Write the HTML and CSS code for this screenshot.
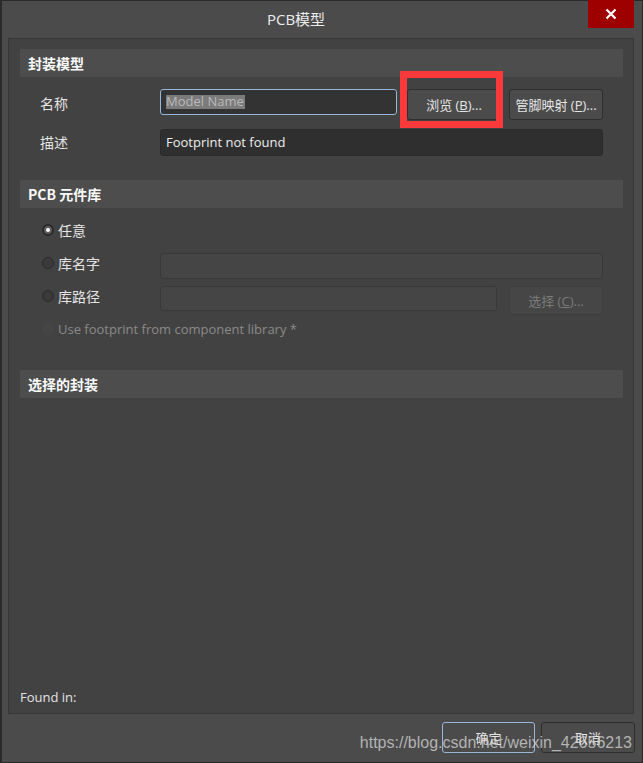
FILE: index.html
```html
<!DOCTYPE html>
<html lang="zh-CN">
<head>
  <meta charset="UTF-8">
  <title>PCB模型</title>
  <link rel="stylesheet" href="styles.css">
</head>
<body>

<div class="window">
  <!-- title bar -->
  <div class="titlebar">
    <div class="title">PCB模型</div>
    <div class="close-btn">
      <svg width="12" height="12" viewBox="0 0 12 12"><path d="M1.5 1.5 L10.5 10.5 M10.5 1.5 L1.5 10.5" stroke="#fff" stroke-width="2.2"/></svg>
    </div>
  </div>

  <div class="panel">
    <!-- 封装模型 -->
    <div class="section-head">封装模型</div>
    <div class="rows rows-model">
      <div class="row row-name">
        <span class="label">名称</span>
        <div class="input input-focus"><span class="sel">Model Name</span></div>
        <button class="btn">浏览 (<u>B</u>)...</button>
        <button class="btn">管脚映射 (<u>P</u>)...</button>
      </div>
      <div class="row row-desc">
        <span class="label">描述</span>
        <div class="input input-dark">Footprint not found</div>
      </div>
    </div>

    <!-- PCB 元件库 -->
    <div class="section-head head-lib">PCB 元件库</div>
    <div class="rows rows-lib">
      <div class="row row-radio">
        <span class="label radio-label"><span class="radio checked"></span>任意</span>
      </div>
      <div class="row row-libname">
        <span class="label radio-label"><span class="radio"></span>库名字</span>
        <div class="input input-off"></div>
      </div>
      <div class="row row-libpath">
        <span class="label radio-label"><span class="radio"></span>库路径</span>
        <div class="input input-off"></div>
        <button class="btn btn-off">选择 (<u>C</u>)...</button>
      </div>
      <div class="row row-use">
        <span class="radio-label off"><span class="radio radio-off"></span>Use footprint from component library *</span>
      </div>
    </div>

    <!-- 选择的封装 -->
    <div class="section-head head-sel">选择的封装</div>
    <div class="preview"></div>
    <div class="found">Found in:</div>
  </div>

  <div class="footer">
    <button class="btn btn-ok">确定</button>
    <button class="btn btn-cancel">取消</button>
  </div>

  <!-- annotation + watermark sit over the dialog -->
  <div class="mark"></div>
  <div class="watermark">https://blog.csdn.net/weixin_42656213</div>
</div>

</body>
</html>
```

FILE: styles.css
```css
/* dark dialog */
body {
  margin: 0;
  background: #4b4b4b;
  font-family: "Open Sans", "Noto Sans CJK SC", sans-serif;
  font-size: 13px;
  color: #e6e6e6;
}

.window {
  position: relative;
  width: 643px;
  height: 763px;
  box-sizing: border-box;
  border: 1px solid #2a2a2a;
  border-left-width: 2px;
  background: #4b4b4b;
  display: flex;
  flex-direction: column;
}

/* title bar */
.titlebar {
  height: 37px;
  display: flex;
  align-items: flex-start;
}
.title {
  flex: 1;
  text-align: center;
  line-height: 37px;
  font-size: 15px;
  color: #ececec;
  padding-left: 2px;
}
.close-btn {
  width: 46px;
  height: 28px;
  margin-top: -1px;
  margin-right: 8px;
  background: #9e0000;
  display: flex;
  align-items: center;
  justify-content: center;
}

/* main panel */
.panel {
  margin: 0 8px 0 6px;
  height: 676px;
  box-sizing: border-box;
  border: 1px solid #363636;
  background: #424242;
  padding: 10px 10px 7px 11px;
  display: flex;
  flex-direction: column;
}

.section-head {
  height: 28px;
  line-height: 28px;
  padding-left: 8px;
  background: #4d4d4d;
  font-family: "Noto Sans CJK SC", sans-serif;
  font-weight: bold;
  font-size: 14px;
  color: #fafafa;
}
.head-lib { margin-top: 24px; }
.head-sel { margin-top: 32px; }

.rows {
  padding: 0 20px;
}
.rows-model { padding-top: 12px; }
.rows-lib { padding-top: 12px; }

.row {
  display: flex;
  align-items: flex-start;
}
.label {
  width: 120px;
  flex: none;
  font-family: "Noto Sans CJK SC", sans-serif;
  font-size: 14px;
  color: #e4e4e4;
}

.input {
  box-sizing: border-box;
  border-radius: 3px;
  padding-left: 5px;
}

/* 名称 row */
.row-name { height: 31px; margin-bottom: 9px; }
.row-name .label { line-height: 28px; }
.input-focus {
  width: 237px;
  height: 26px;
  border: 1px solid #97b6d8;
  background: #333333;
  display: flex;
  align-items: center;
  margin-right: 10px;
}
.sel {
  background: #7b7b7b;
  color: #b9b9b9;
  line-height: 13px;
  padding: 0 1px 1px 0;
}

/* 描述 row */
.row-desc { height: 27px; }
.row-desc .label { line-height: 27px; }
.input-dark {
  flex: 1;
  height: 27px;
  line-height: 25px;
  border: 1px solid #2a2a2a;
  background: #2f2f2f;
  color: #eeeeee;
}

/* buttons */
.btn {
  font-family: "Open Sans", "Noto Sans CJK SC", sans-serif;
  font-size: 13px;
  color: #e6e6e6;
  width: 94px;
  height: 31px;
  padding: 0;
  box-sizing: border-box;
  border: 1px solid #2e2e2e;
  border-radius: 3px;
  background: #4b4b4b;
}
.row-name .btn + .btn { margin-left: 8px; }
.btn-off {
  height: 29px;
  margin-left: 12px;
  color: #7b7b7b;
  background: #464646;
  border-color: #3e3e3e;
}

/* radios */
.radio-label {
  display: flex;
  align-items: center;
}
.radio {
  width: 12px;
  height: 12px;
  box-sizing: border-box;
  margin: 0 4px 0 2px;
  border-radius: 50%;
  border: 1px solid #2a2a2a;
  background: #3a3a3a;
  flex: none;
  display: flex;
  align-items: center;
  justify-content: center;
}
.radio.checked {
  border: 2px solid #2a2a2a;
  background: #5c5c5c;
}
.radio.checked::after {
  content: "";
  width: 4px;
  height: 4px;
  border-radius: 50%;
  background: #ffffff;
}
.radio-off {
  border-color: #474747;
  background: #454545;
}
.off {
  color: #8a8a8a;
}

.row-radio { height: 20px; }
.row-radio .label { line-height: 20px; }
.row-libname { margin-top: 13px; height: 26px; }
.row-libpath { margin-top: 7px; height: 29px; }
.row-libname .label { line-height: 20px; }
.row-libpath .label { line-height: 20px; }
.input-off {
  flex: 1;
  height: 26px;
  border: 1px solid #393939;
  background: #454545;
}
.row-libpath .input-off { height: 25px; }
.row-use { margin-top: 5px; height: 18px; line-height: 18px; }

/* 选择的封装 */
.preview { flex: 1; }
.found {
  padding-left: 0;
  line-height: 18px;
  color: #e2e2e2;
}

/* footer */
.footer {
  display: flex;
  justify-content: flex-end;
  gap: 6px;
  padding: 8px 7px 0 0;
}
.btn-ok {
  width: 93px;
  border-color: #97b6d8;
  font-family: "Noto Sans CJK SC", sans-serif;
}
.btn-cancel {
  font-family: "Noto Sans CJK SC", sans-serif;
}

/* red annotation frame */
.mark {
  position: absolute;
  left: 398px;
  top: 70px;
  width: 103px;
  height: 57px;
  box-sizing: border-box;
  border: 7px solid #fa3a3a;
}

.watermark {
  position: absolute;
  right: 10px;
  top: 733px;
  font-family: "Liberation Sans", Arial, sans-serif;
  font-size: 16px;
  color: rgba(215, 215, 215, 0.75);
  white-space: nowrap;
}
```
